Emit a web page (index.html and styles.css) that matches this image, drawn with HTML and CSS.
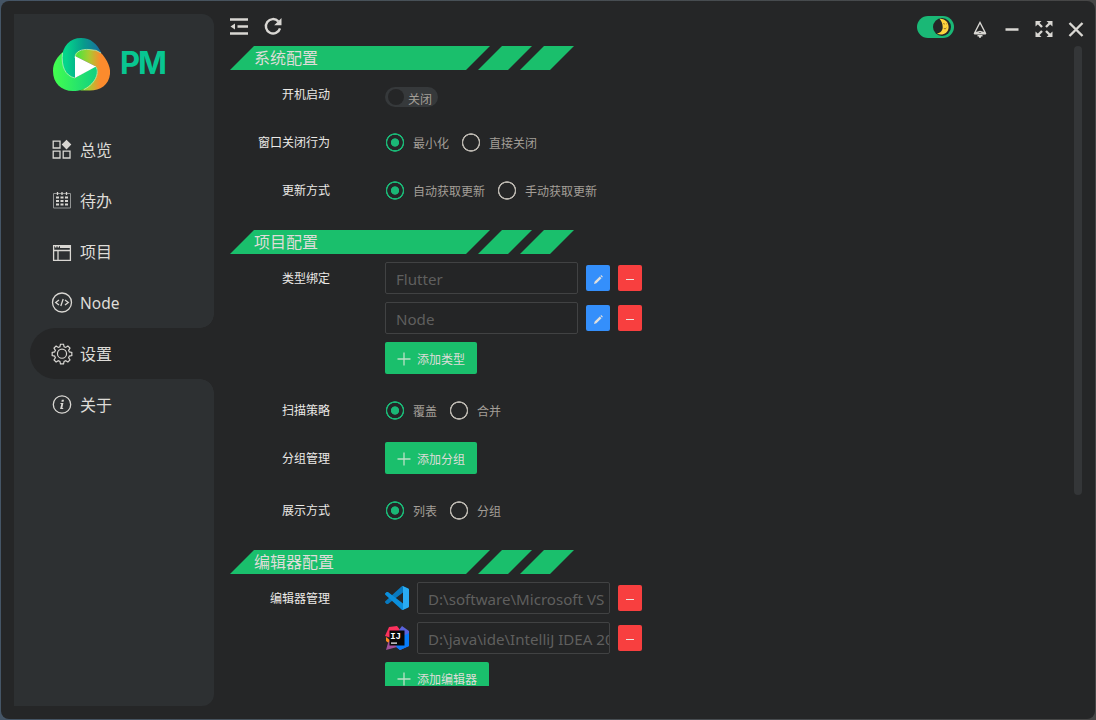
FILE: index.html
```html
<!DOCTYPE html>
<html lang="zh-CN">
<head>
<meta charset="utf-8">
<title>PM</title>
<link rel="stylesheet" href="styles.css">
</head>
<body>
<div class="window">
  <aside class="sidebar">
    <div class="brand">
      <svg class="brand-logo" viewBox="53 38 57 53">
        <defs>
          <linearGradient id="teal" x1="0" x2="1"><stop offset=".1" stop-color="#04d58b"/><stop offset=".55" stop-color="#079c8c"/><stop offset="1" stop-color="#1a6aa0"/></linearGradient>
          <linearGradient id="green" x1="0" x2="1"><stop offset="0" stop-color="#43ff4e"/><stop offset="1" stop-color="#10cf82"/></linearGradient>
          <linearGradient id="orange" x1="0" x2="1"><stop offset=".1" stop-color="#55e23c"/><stop offset=".4" stop-color="#a8cc30"/><stop offset=".72" stop-color="#fb8b2d"/></linearGradient>
        </defs>
        <path fill="url(#green)" d="M64 51C57 57 53 63 53 71C53 83 61 91 73 91C86 91 97 84 97.500 71C97.500 68 96 67 95 66L75 78L66 72Z"/>
        <path fill="url(#teal)" d="M75 78C66 75 62 68 62 59C62 46 70 38 81 38C91 38 97 44 101.500 53C98 50 94 49.500 89 49.500C81 49 75 51 75 58Z"/>
        <path fill="url(#orange)" d="M75 56C75 51 82 49.500 89 49.500C98 49.500 102 53 105 58C109 64 110.500 69 110 74C109 85 100 90.500 90 90.500H80C92 86 97 79 97.500 71C97.500 68 96 67 95 66Z"/>
        <path fill="none" stroke="#b9f4b8" stroke-width=".8" d="M62.500 53C61 66 65 76 75 78M75 58C75 51 82 49 89 49.500Q97 49.500 101 53M95 66C100 70 97 83 84 89.500"/>
        <path fill="#fff" d="M75 56L96 66.500L75 78Z"/>
      </svg>
      <span class="brand-name">PM</span>
    </div>
    <nav class="nav">
      <a class="nav-item"><svg class="nav-icon" viewBox="0 0 20 20"><path class="line" d="M1.200 1.200h6.800v6.800H1.200zM1.200 11.200h6.800v6.800H1.200zM11.200 11.200h6.800v6.800h-6.800z"/><path class="solid" d="M14.500-.3l4.800 4.900L14.500 9.500l-4.800-4.900z"/></svg><span>总览</span></a>
      <a class="nav-item"><svg class="nav-icon" viewBox="0 0 20 20"><path class="thin" d="M1.500 2.500h17v14.500h-17z"/><path class="line" d="M5.500 1v3M10 1v3M14.500 1v3"/><path class="grid" d="M4 6.500h3M8.500 6.500h3M13 6.500h3M4 10h3M8.500 10h3M13 10h3M4 13.500h3M8.500 13.500h3M13 13.500h3"/></svg><span>待办</span></a>
      <a class="nav-item"><svg class="nav-icon" viewBox="0 0 20 20"><path class="line" d="M1.600 3.600h16.800v14.800H1.600zM1.600 8.500h16.800M6 8.500v10"/><path class="solid" d="M8 3.500h10.500v2.500H8zM3 4h1.500v1.500H3zM5.500 4h1.500v1.500H5.500z"/></svg><span>项目</span></a>
      <a class="nav-item"><svg class="nav-icon" viewBox="0 0 20 20"><circle class="line" cx="10" cy="9.500" r="9.500"/><path class="line" d="M7 7L3.700 9.500L7 12M13 7l3.300 2.500l-3.300 2.500M11.200 6L8.800 13"/></svg><span class="latin">Node</span></a>
      <a class="nav-item active"><svg class="nav-icon" viewBox="-1 0 22 22"><path class="line" d="M8.300 0.300h3.400l.6 2.700 1.800.8 2.400-1.500 2.300 2.300-1.500 2.400.8 1.700 2.700.6v3.400l-2.700.6-.8 1.800 1.500 2.400-2.300 2.300-2.400-1.500-1.800.8-.6 2.700H8.300l-.6-2.700-1.800-.8-2.400 1.500-2.300-2.300 1.500-2.400-.8-1.800-2.700-.6V9.300l2.700-.6.8-1.700-1.500-2.400 2.300-2.300 2.400 1.500 1.800-.8z"/><circle class="line" cx="10" cy="10.700" r="5"/></svg><span>设置</span></a>
      <a class="nav-item"><svg class="nav-icon" viewBox="0 0 20 20"><circle class="line" cx="10" cy="9.500" r="8.700"/><path class="solid" d="M9.800 4.800h2.200l-.4 1.900H9.400zM8.600 8h2.800l-1.100 4.900h1l-.2 1.200H8.100l1.200-5H8.300z"/></svg><span>关于</span></a>
    </nav>
  </aside>

  <main class="main">
    <header class="toolbar">
      <div class="tools">
        <svg class="tool" viewBox="0 0 20 20"><path class="bold" d="M1 3.500h18M8.500 10.500H19M1 17.500h18"/><path class="solid" d="M6 7.500v6L1.500 10.500z"/></svg>
        <svg class="tool" viewBox="0 0 20 20"><path class="bold" d="M15.300 5.300A7.200 7.200 0 1 0 17 12.300"/><path class="solid" d="M18.500 2v7.300h-7.300z"/></svg>
      </div>
      <div class="window-controls">
        <span class="theme-switch"><svg class="moon" viewBox="0 0 18 18"><circle cx="9" cy="9" r="9" fill="#252627"/><path fill="#ffd33d" d="M6.500 .8C12.500 .5 16 5 15.600 9.800C15 15.500 9.500 18 4 15.800C7.500 15 9.700 12.500 9.700 9.300C9.700 6 8.500 3 6.500 .8Z"/><path d="M10.300 5.500l1.500.6M13.300 6l.8-.7M10.800 10.500q1.500 1 2.600-.6" fill="none" stroke="#715424" stroke-width=".8"/></svg></span>
        <svg class="control" viewBox="0 0 18 18"><path class="pin" d="M9 2.500L14.800 13.700Q9 9.500 3.200 13.700ZM3.200 13.700h11.600M6 13.500Q9 9.500 12 13.500M6.500 15.700h5M8 17h2"/></svg>
        <svg class="control" viewBox="0 0 18 18"><path class="bold" d="M2.500 9.500h13"/></svg>
        <svg class="control" viewBox="0 0 18 18"><path class="bold" d="M3 3l4 4M15 3l-4 4M3 15l4-4M15 15l-4-4"/><path class="solid" d="M.5 1h6l-6 5.500zM17.500 1h-6l6 5.500zM.5 17h6l-6-5.500zM17.500 17h-6l6-5.500z"/></svg>
        <svg class="control" viewBox="0 0 18 18"><path class="bold" d="M2.500 3l13 13M15.500 3l-13 13"/></svg>
      </div>
    </header>

    <div class="scroll-area">
      <div class="settings">
        <section class="section">
          <h2 class="banner"><span class="banner-title">系统配置</span><i class="stripe"></i><i class="stripe"></i></h2>
          <div class="field"><span class="label">开机启动</span><div class="row"><span class="switch"><i class="knob"></i><span>关闭</span></span></div></div>
          <div class="field"><span class="label">窗口关闭行为</span><div class="row radios"><span class="radio checked"><i class="dot"></i><span>最小化</span></span><span class="radio"><i class="dot"></i><span>直接关闭</span></span></div></div>
          <div class="field"><span class="label">更新方式</span><div class="row radios"><span class="radio checked"><i class="dot"></i><span>自动获取更新</span></span><span class="radio"><i class="dot"></i><span>手动获取更新</span></span></div></div>
        </section>

        <section class="section">
          <h2 class="banner"><span class="banner-title">项目配置</span><i class="stripe"></i><i class="stripe"></i></h2>
          <div class="field has-button"><span class="label">类型绑定</span>
            <div class="stack">
              <div class="row"><span class="input">Flutter</span><span class="square edit"><svg viewBox="0 0 12 12"><path d="M2 10l.7-2.400L7.800 2.500l1.700 1.700L4.400 9.300zM8.400 1.900l.8-.8 1.700 1.700-.8.800z"/></svg></span><span class="square remove"><i class="minus"></i></span></div>
              <div class="row"><span class="input">Node</span><span class="square edit"><svg viewBox="0 0 12 12"><path d="M2 10l.7-2.400L7.800 2.500l1.700 1.700L4.400 9.300zM8.400 1.900l.8-.8 1.700 1.700-.8.800z"/></svg></span><span class="square remove"><i class="minus"></i></span></div>
              <div class="row"><span class="button"><svg viewBox="0 0 14 14"><path d="M7 .5v13M.5 7h13"/></svg><span>添加类型</span></span></div>
            </div>
          </div>
          <div class="field"><span class="label">扫描策略</span><div class="row radios"><span class="radio checked"><i class="dot"></i><span>覆盖</span></span><span class="radio"><i class="dot"></i><span>合并</span></span></div></div>
          <div class="field has-button"><span class="label">分组管理</span><div class="row"><span class="button"><svg viewBox="0 0 14 14"><path d="M7 .5v13M.5 7h13"/></svg><span>添加分组</span></span></div></div>
          <div class="field"><span class="label">展示方式</span><div class="row radios"><span class="radio checked"><i class="dot"></i><span>列表</span></span><span class="radio"><i class="dot"></i><span>分组</span></span></div></div>
        </section>

        <section class="section">
          <h2 class="banner"><span class="banner-title">编辑器配置</span><i class="stripe"></i><i class="stripe"></i></h2>
          <div class="field has-button"><span class="label">编辑器管理</span>
            <div class="stack">
              <div class="row">
                <svg class="app-icon" viewBox="0 0 24 24"><path fill="#0879bf" d="M18.200.2L24 3v6L18 6.500L3 18 1.600 17.900.3 16.700Q-.3 16 .3 15.300L16.500.500Q17.300-.1 18.200.2Z"/><path fill="#0b8fdc" d="M18.200 23.800L24 21v-6l-6 2.500L3 6 1.600 6.100.3 7.300Q-.3 8 .3 8.700L16.500 23.500Q17.300 24.100 18.200 23.800Z"/><path fill="#2aabf2" d="M18.200.2L23.100 2.600Q24 3 24 4V20Q24 21 23.100 21.400L18.200 23.800Q17.200 24.200 16.500 23.500Q18 24.200 18 22.500V1.500Q18-.2 16.500.5Q17.300-.1 18.200.2Z"/></svg>
                <span class="input">D:\software\Microsoft VS</span><span class="square remove"><i class="minus"></i></span>
              </div>
              <div class="row">
                <svg class="app-icon" viewBox="0 0 24 24"><path fill="#ff8a1d" d="M1 11L6 15L5 18L1 15Z"/><path fill="#fb315d" d="M4 1L12 0L16 5L10 13L0 10Z"/><path fill="#5a62dc" d="M14 4L17 0L24 5V20L15 24L10 20Z"/><path fill="#087cfa" d="M18 10L24 7V20L15 24L10 20Z"/><path fill="#a2519a" d="M5 14L12 21L1 24L3 17Z"/><path fill="#080808" d="M4.500 4.500h15v15h-15z"/><text class="ij-text" x="5.200" y="13">IJ</text><path fill="#fff" d="M6 16.500h6v1.200H6z"/></svg>
                <span class="input">D:\java\ide\IntelliJ IDEA 20</span><span class="square remove"><i class="minus"></i></span>
              </div>
              <div class="row"><span class="button"><svg viewBox="0 0 14 14"><path d="M7 .5v13M.5 7h13"/></svg><span>添加编辑器</span></span></div>
            </div>
          </div>
        </section>
      </div>
      <div class="scrollbar"></div>
    </div>
  </main>
</div>
</body>
</html>
```
FILE: styles.css
```css
* { box-sizing: border-box; }
body {
  margin: 0;
  height: 720px;
  padding: 1px;
  overflow: hidden;
  background: linear-gradient(90deg, #455566, #48525a 30%, #464646);
  color: #dedcd8;
  font-family: "Noto Sans", "Noto Sans CJK SC", sans-serif;
  font-size: 12px;
}
.window {
  display: flex;
  gap: 16px;
  height: 718px;
  padding: 13px 11px 13px 13px;
  border-radius: 8px;
  background: #252627;
  overflow: hidden;
}
.sidebar {
  width: 200px;
  height: 692px;
  flex: none;
  border-radius: 0 12px 12px 0;
  background: #2d3032;
}
.brand { display: flex; height: 110px; padding: 24px 0 0 39px; gap: 10px; }
.brand-logo { width: 57px; height: 53px; flex: none; }
.brand-name {
  color: #08c691;
  font: 700 31px/49px Inter, sans-serif;
  letter-spacing: -2px;
}
.nav-item {
  display: flex;
  align-items: center;
  gap: 8px;
  height: 51px;
  margin-left: 16px;
  padding-left: 22px;
  font-size: 16px;
  line-height: 24px;
}
.latin { font-size: 15.500px; }
.nav-icon { width: 20px; height: 20px; overflow: visible; }
.nav-item.active {
  position: relative;
  border-radius: 26px 0 0 26px;
  background: #252627;
}
.nav-item.active::before, .nav-item.active::after {
  content: "";
  position: absolute;
  right: 0;
  width: 14px;
  height: 14px;
}
.nav-item.active::before { bottom: 100%; background: radial-gradient(circle at 0 0, transparent 13.500px, #252627 14px); }
.nav-item.active::after { top: 100%; background: radial-gradient(circle at 0 100%, transparent 13.500px, #252627 14px); }
.line, .thin, .bold, .grid, .pin { fill: none; stroke: #d9d7d3; stroke-width: 1.300; }
.thin { stroke: #929494; stroke-width: 1; }
.grid { stroke-width: 2; }
.pin { stroke-width: 1.400; }
.bold { stroke-width: 2.400; }
.solid { fill: #d9d7d3; }

.main { flex: 1; min-width: 0; }
.toolbar { display: flex; justify-content: space-between; height: 32px; }
.tools { display: flex; gap: 14px; padding-top: 2px; }
.tool { width: 20px; height: 20px; margin-left: -1px; }
.tools .tool + .tool { margin-left: 0; }
.window-controls { display: flex; gap: 14px; margin-right: -1px; }
.control { width: 18px; height: 18px; margin-top: 6px; }
.theme-switch {
  display: flex;
  justify-content: flex-end;
  width: 37px;
  height: 22px;
  margin: 2px 3px 0 0;
  padding: 2px 3px;
  border-radius: 11px;
  background: #1ab876;
}
.moon { width: 18px; height: 18px; }

.scroll-area { display: flex; justify-content: space-between; height: 640px; padding-right: 2px; overflow: hidden; }
.scrollbar { width: 8px; height: 449px; border-radius: 4px; background: #343638; }
.section { margin-bottom: 24px; }
.banner { display: flex; height: 24px; margin: 0 0 8px; font-size: 16px; font-weight: 400; line-height: 24px; }
.banner-title {
  width: 260px;
  padding-left: 24px;
  background: #1abf6c;
  clip-path: polygon(24px 0, 100% 0, calc(100% - 24px) 100%, 0 100%);
}
.stripe {
  width: 54px;
  margin-left: -12px;
  background: #1abf6c;
  clip-path: polygon(24px 0, 100% 0, 30px 100%, 0 100%);
}
.field { display: flex; gap: 55px; margin-bottom: 16px; }
.field:last-child { margin-bottom: 0; }
.has-button { margin-bottom: 20px; }
.label { width: 100px; height: 32px; padding-top: 1px; line-height: 32px; text-align: right; color: #ebe9e6; }
.stack { display: flex; flex-direction: column; gap: 8px; }
.row { display: flex; align-items: center; gap: 8px; height: 32px; }
.radios { gap: 12px; }
.radio { display: flex; align-items: center; gap: 8px; color: #a39e97; }
.radio span { padding-top: 2px; }
.dot {
  width: 20px;
  height: 20px;
  margin-top: 1px;
  background: radial-gradient(circle at 10px 9.500px, transparent 7.400px, #b9b5ae 8px, #b9b5ae 8.900px, transparent 9.500px);
}
.checked .dot {
  background: radial-gradient(circle at 10px 9.500px, #1ab876 3.800px, transparent 4.500px, transparent 7.400px, #1ab876 8px, #1ab876 8.900px, transparent 9.500px);
}
.switch {
  display: flex;
  align-items: center;
  gap: 4px;
  width: 53px;
  height: 20px;
  padding-left: 3px;
  border-radius: 10px;
  margin-top: 6px;
  background: #36393b;
  color: #a39e97;
}
.switch span { padding-top: 4px; }
.knob { width: 16px; height: 16px; border-radius: 50%; background: #252627; }
.input {
  width: 193px;
  height: 32px;
  padding: 2px 0 0 10px;
  border: 1px solid #414243;
  border-radius: 2px;
  background: #242526;
  color: #5f5f5e;
  font-size: 15.100px;
  line-height: 29px;
  white-space: nowrap;
  overflow: hidden;
}
.square { display: grid; place-items: center; width: 24px; height: 26px; border-radius: 2px; }
.edit { background: #348ffb; }
.edit svg { width: 12px; height: 12px; margin-top: 3px; fill: #e0dfdc; }
.remove { background: #f83f3f; }
.minus { width: 8px; height: 1px; margin-top: 3px; background: #ece3df; }
.button {
  display: flex;
  align-items: center;
  gap: 6px;
  height: 32px;
  padding: 2px 12px 0 12px;
  border-radius: 2px;
  background: #1abf6c;
}
.button svg { width: 14px; height: 14px; fill: none; stroke: #b9e0c5; stroke-width: 1.300; }
.app-icon { width: 24px; height: 24px; }
.ij-text { fill: #fff; font: 700 9px "Liberation Mono", monospace; }
```
